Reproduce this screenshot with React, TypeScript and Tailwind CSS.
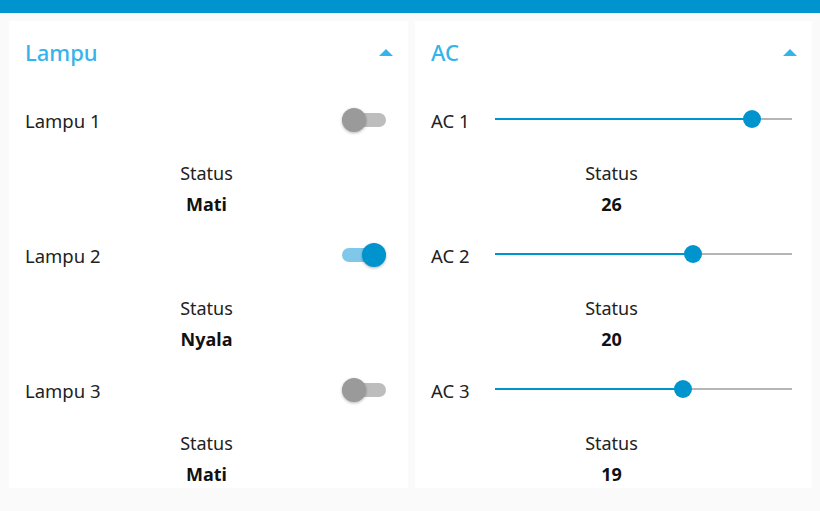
import { useState } from 'react'

type Lamp = { name: string; on: boolean }
type Ac = { name: string; value: number }

const lamps: Lamp[] = [
  { name: 'Lampu 1', on: false },
  { name: 'Lampu 2', on: true },
  { name: 'Lampu 3', on: false },
]

const acs: Ac[] = [
  { name: 'AC 1', value: 26 },
  { name: 'AC 2', value: 20 },
  { name: 'AC 3', value: 19 },
]

const MAX = 30

function Toggle({ on }: { on: boolean }) {
  return (
    <div className="relative w-[44px] h-[14px] mb-[2px]">
      <div className={`absolute inset-0 rounded-full ${on ? 'bg-[#7fc8ea]' : 'bg-[#bdbdbd]'}`} />
      <div
        className={`absolute top-[-5px] w-[24px] h-[24px] rounded-full shadow-[0_1px_3px_rgba(0,0,0,0.3)] ${
          on ? 'right-0 bg-[#0094ce]' : 'left-0 bg-[#9a9a9a]'
        }`}
      />
    </div>
  )
}

function Slider({ value }: { value: number }) {
  const pct = (value / MAX) * 100
  return (
    <div className="relative flex-1 h-[18px] mb-[4px]">
      <div className="absolute left-0 right-0 top-[8px] h-[2px] bg-[#b5b5b5]" />
      <div className="absolute left-0 top-[8px] h-[2px] bg-[#0094ce]" style={{ width: `${pct}%` }} />
      <div
        className="absolute top-0 w-[18px] h-[18px] -ml-[9px] rounded-full bg-[#0094ce]"
        style={{ left: `${pct}%` }}
      />
    </div>
  )
}

function StatusBlock({ value }: { value: string }) {
  return (
    <div className="h-[87px] pt-[16px] flex flex-col items-center pr-[4px]">
      <div className="h-[24px] leading-[24px] text-[18px] text-[#222]">Status</div>
      <div className="mt-[7px] h-[24px] leading-[24px] text-[18px] font-bold text-[#111]">{value}</div>
    </div>
  )
}

function GroupHeader({ title }: { title: string }) {
  return (
    <div className="h-[62px] flex items-center justify-between pl-[16px] pr-[15px]">
      <span className="text-[22px] font-medium text-[#36b3ec]">{title}</span>
      <svg width="14" height="7" viewBox="0 0 14 7">
        <path d="M0 7 L7 0 L14 7 Z" fill="#36b3ec" />
      </svg>
    </div>
  )
}

export default function App() {
  const [lampState] = useState(lamps)
  const [acState] = useState(acs)

  return (
    <div className="min-h-[511px] bg-[#fafafa]" style={{ fontFamily: '"Noto Sans", "Open Sans", sans-serif' }}>
      <div className="h-[13px] bg-[#0094ce]" />
      <div className="grid grid-cols-[399px_397px] gap-[7px] pl-[9px] pt-[8px]">
        <section className="h-[467px] bg-white overflow-hidden">
          <GroupHeader title="Lampu" />
          <div className="mt-[14px]">
            {lampState.map((l) => (
              <div key={l.name}>
                <div className="h-[48px] flex items-center justify-between pl-[16px] pr-[22px]">
                  <span className="text-[18.5px] text-[#222]">{l.name}</span>
                  <Toggle on={l.on} />
                </div>
                <StatusBlock value={l.on ? 'Nyala' : 'Mati'} />
              </div>
            ))}
          </div>
        </section>

        <section className="h-[467px] bg-white overflow-hidden">
          <GroupHeader title="AC" />
          <div className="mt-[14px]">
            {acState.map((a) => (
              <div key={a.name}>
                <div className="h-[48px] flex items-center pl-[16px] pr-[20px]">
                  <span className="w-[64px] text-[18.5px] text-[#222]">{a.name}</span>
                  <Slider value={a.value} />
                </div>
                <StatusBlock value={String(a.value)} />
              </div>
            ))}
          </div>
        </section>
      </div>
    </div>
  )
}
